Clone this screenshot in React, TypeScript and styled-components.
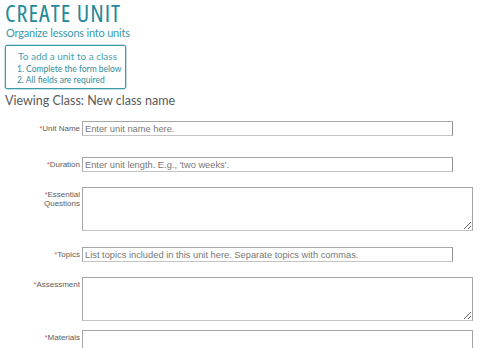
import styled, { createGlobalStyle } from 'styled-components';

const GlobalStyle = createGlobalStyle`
	body {
		margin: 0;
		background: #ffffff;
		font-family: 'Lato', 'Liberation Sans', sans-serif;
	}
`;

const fields = [
	{ label: ['Unit Name'], kind: 'input', placeholder: 'Enter unit name here.', gap: 21 },
	{ label: ['Duration'], kind: 'input', placeholder: "Enter unit length. E.g., 'two weeks'.", gap: 15 },
	{ label: ['Essential', 'Questions'], kind: 'area', placeholder: '', gap: 16 },
	{ label: ['Topics'], kind: 'input', placeholder: 'List topics included in this unit here. Separate topics with commas.', gap: 15 },
	{ label: ['Assessment'], kind: 'area', placeholder: '', gap: 9 },
	{ label: ['Materials'], kind: 'area', placeholder: '', gap: 0 },
];

export default function App() {
	return (
		<Page>
			<GlobalStyle />
			<Title>CREATE UNIT</Title>
			<Subtitle>Organize lessons into units</Subtitle>
			<InfoBox>
				<InfoTitle>To add a unit to a class</InfoTitle>
				<InfoLine>1. Complete the form below</InfoLine>
				<InfoLine>2. All fields are required</InfoLine>
			</InfoBox>
			<ClassHeading>Viewing Class: New class name</ClassHeading>
			<Form>
				{fields.map((f) => (
					<Field key={f.label.join(' ')} gap={f.gap}>
						<Label>
							{f.label.map((line, i) => (
								<span key={line}>
									{i === 0 && <Required>*</Required>}
									{line}
								</span>
							))}
						</Label>
						{f.kind === 'input' ? <TextInput placeholder={f.placeholder} /> : <TextArea />}
					</Field>
				))}
			</Form>
		</Page>
	);
}

const Page = styled.div`
	padding: 0 0 0 5px;
	height: 348px;
	overflow: hidden;
	box-sizing: border-box;
`;

const Title = styled.h1`
	margin: 0;
	font-family: 'Open Sans', sans-serif;
	font-stretch: 75%;
	font-weight: 400;
	font-size: 24px;
	line-height: 25px;
	letter-spacing: 1px;
	color: #23899b;
`;

const Subtitle = styled.div`
	margin: 1px 0 6px 1px;
	font-size: 11px;
	line-height: 13px;
	letter-spacing: -0.2px;
	color: #3a98a8;
`;

const InfoBox = styled.div`
	width: 121px;
	height: 44px;
	border: 1px solid #3d9aa9;
	border-radius: 2px;
	padding: 4px 0 0 11px;
	box-sizing: border-box;
	box-shadow: 0 0 0 0.5px #8cc3cc;
`;

const InfoTitle = styled.div`
	font-size: 10px;
	line-height: 12px;
	color: #4aa0ad;
	margin: 0 0 2px 1px;
	white-space: nowrap;
`;

const InfoLine = styled.div`
	font-size: 8.5px;
	line-height: 11px;
	color: #2e8d9c;
	white-space: nowrap;
`;

const ClassHeading = styled.div`
	margin: 4px 0 13px 0;
	font-size: 12.5px;
	line-height: 15px;
	color: #5a5a5a;
`;

const Form = styled.div`
	display: flex;
	flex-direction: column;
`;

const Field = styled.div<{ gap: number }>`
	display: grid;
	grid-template-columns: 75px auto;
	column-gap: 2px;
	align-items: start;
	margin-bottom: ${(p) => p.gap}px;
`;

const Label = styled.label`
	display: flex;
	flex-direction: column;
	align-items: flex-end;
	padding-top: 3px;
	font-family: 'Liberation Sans', Arial, sans-serif;
	font-size: 8px;
	line-height: 9px;
	color: #5c5c5c;
	text-align: right;
`;

const Required = styled.span`
	color: #d9534f;
	font-size: 7px;
	vertical-align: top;
`;

const TextInput = styled.input`
	width: 371px;
	height: 15px;
	box-sizing: border-box;
	margin: 0;
	padding: 0 2px;
	border: 1px solid #a6a6a6;
	border-right-color: #8f8f8f;
	border-bottom-color: #c4c4c4;
	font-family: 'Liberation Sans', Arial, sans-serif;
	font-size: 9.3px;
	color: #333333;
	outline: none;
	display: block;

	&::placeholder {
		color: #777777;
	}
`;

const TextArea = styled.textarea`
	width: 391px;
	height: 44px;
	box-sizing: border-box;
	margin: 0;
	padding: 2px;
	border: 1px solid #a6a6a6;
	border-bottom-color: #c4c4c4;
	font-family: 'Liberation Sans', Arial, sans-serif;
	font-size: 9.3px;
	outline: none;
	display: block;
`;
